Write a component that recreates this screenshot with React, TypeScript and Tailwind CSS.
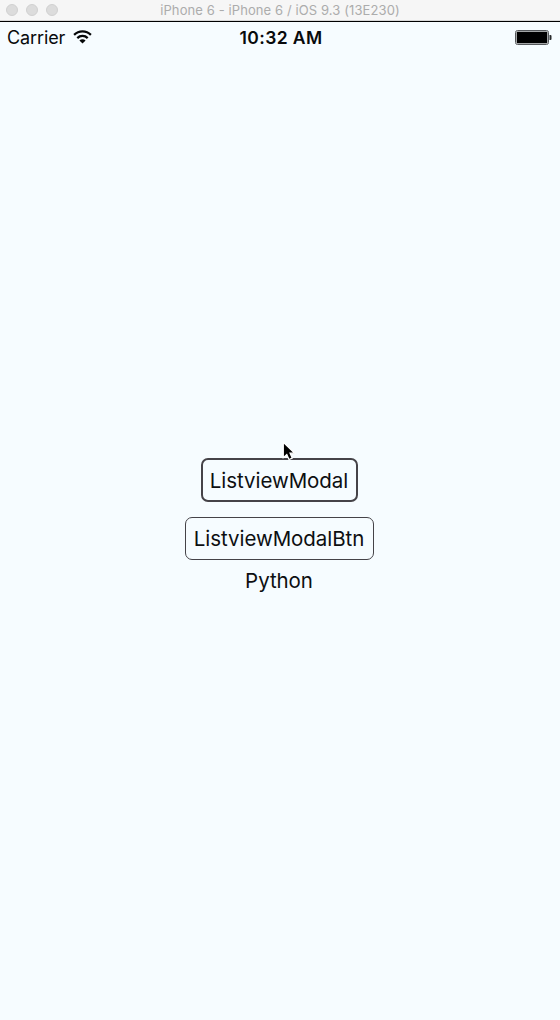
function TitleBar() {
  return (
    <header className="relative flex h-[22px] items-center justify-center border-b border-black bg-[#f6f6f6] shadow-[inset_0_-1px_0_#d8d8d8]">
      <div className="absolute top-1 left-1.5 flex gap-2">
        <span className="size-3 rounded-full border border-[#d1d1d1] bg-[#dcdcdc]" />
        <span className="size-3 rounded-full border border-[#d1d1d1] bg-[#dcdcdc]" />
        <span className="size-3 rounded-full border border-[#d1d1d1] bg-[#dcdcdc]" />
      </div>
      <h1 className="pb-px text-[13px] leading-5 tracking-[0.1px] whitespace-nowrap text-[#acacac]">
        iPhone 6 - iPhone 6 / iOS 9.3 (13E230)
      </h1>
    </header>
  );
}

function WifiIcon() {
  return (
    <svg className="-mt-px h-[14px] w-[19px]" viewBox="0 0 19 14" fill="none" stroke="#050708" strokeWidth="2.2">
      <path d="M1.1 4.9C5.8.2 13.2.2 17.9 4.9" />
      <path d="M4.3 8.1c2.9-2.9 7.5-2.9 10.4 0" />
      <path d="M6.4 10.4c1.7-1.7 4.5-1.7 6.2 0L9.5 13.6Z" fill="#050708" stroke="none" />
    </svg>
  );
}

function StatusBar() {
  return (
    <div className="grid h-[31px] grid-cols-3 items-center pr-2 pl-[7px] text-[18px] leading-6 text-[#080a0c]">
      <div className="flex items-center gap-2">
        <span className="tracking-[-0.12px]">Carrier</span>
        <WifiIcon />
      </div>
      <span className="pl-[3px] text-center text-[17.5px] font-semibold tracking-[0.4px] whitespace-nowrap">
        10:32 AM
      </span>
      <svg className="h-4 w-[38px] justify-self-end" viewBox="0 0 38 16">
        <rect x="1.5" y=".5" width="33" height="14" rx="2" fill="#fff" stroke="#55585b" />
        <rect x="2.5" y="1.5" width="31" height="12" rx="1" fill="#000" stroke="#c9cccf" strokeWidth=".5" />
        <path d="M35.5 5h1q1 0 1 1v3q0 1-1 1h-1Z" fill="#292b2d" />
      </svg>
    </div>
  );
}

function Cursor() {
  return (
    <svg className="absolute top-[-17px] left-[81px] h-[20px] w-[14px]" viewBox="0 0 14 20">
      <path
        d="M1.3 1.3v15.4l3.5-3.3 2.2 5.1 3.2-1.4-2.2-4.9h4.7Z"
        fill="#000"
        stroke="#fff"
        strokeWidth="1.2"
      />
    </svg>
  );
}

export default function App() {
  return (
    <div className="flex h-[1020px] w-[560px] flex-col overflow-hidden bg-[#f6fcff] font-[Inter,sans-serif]">
      <TitleBar />
      <StatusBar />
      <main className="flex flex-col items-center pt-[405px] pr-[2px] text-[20.5px] tracking-[-0.06px] text-[#0d0f11]">
        <div className="relative">
          <button className="flex h-11 w-[157px] items-center justify-center rounded-[7px] border-2 border-[#454348] pt-[2px] whitespace-nowrap">
            ListviewModal
          </button>
          <Cursor />
        </div>
        <button className="mt-[15px] flex h-[43px] w-[189px] items-center justify-center rounded-[7px] border border-[#454348] pt-px whitespace-nowrap">
          ListviewModalBtn
        </button>
        <span className="mt-1.5 leading-[30px]">Python</span>
      </main>
    </div>
  );
}
